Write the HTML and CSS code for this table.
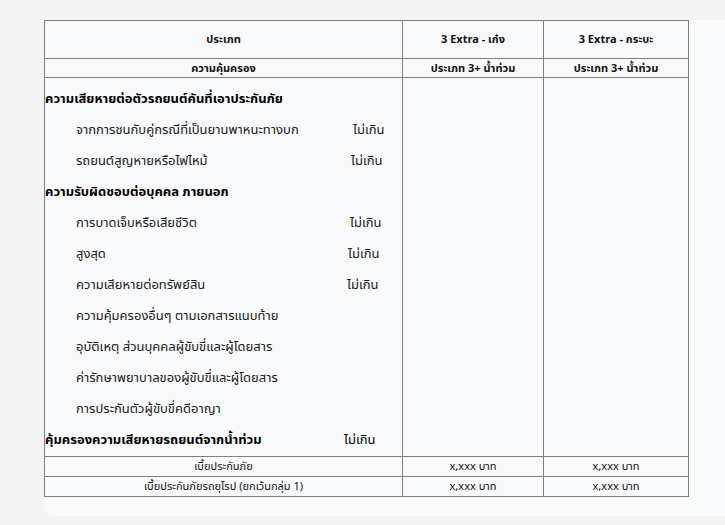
FILE: index.html
```html
<!DOCTYPE html>
<html lang="th">
<head>
<meta charset="utf-8">
<link rel="stylesheet" href="styles.css">
</head>
<body>
<div class="panel">
  <table class="cov">
    <thead>
      <tr class="h1">
        <th class="c1">ประเภท</th>
        <th class="c2">3 Extra - เก๋ง</th>
        <th class="c3">3 Extra - กระบะ</th>
      </tr>
      <tr class="h2">
        <th>ความคุ้มครอง</th>
        <th>ประเภท 3+ น้ำท่วม</th>
        <th>ประเภท 3+ น้ำท่วม</th>
      </tr>
    </thead>
    <tbody>
      <tr class="body">
        <td class="desc">
          <div class="line head">ความเสียหายต่อตัวรถยนต์คันที่เอาประกันภัย</div>
          <div class="line sub"><span class="lbl w1">จากการชนกับคู่กรณีที่เป็นยานพาหนะทางบก</span><span>ไม่เกิน</span></div>
          <div class="line sub"><span class="lbl w2">รถยนต์สูญหายหรือไฟไหม้</span><span>ไม่เกิน</span></div>
          <div class="line head">ความรับผิดชอบต่อบุคคล ภายนอก</div>
          <div class="line sub"><span class="lbl w3">การบาดเจ็บหรือเสียชีวิต</span><span>ไม่เกิน</span></div>
          <div class="line sub"><span class="lbl w4">สูงสุด</span><span>ไม่เกิน</span></div>
          <div class="line sub"><span class="lbl w5">ความเสียหายต่อทรัพย์สิน</span><span>ไม่เกิน</span></div>
          <div class="line sub">ความคุ้มครองอื่นๆ ตามเอกสารแนบท้าย</div>
          <div class="line sub">อุบัติเหตุ ส่วนบุคคลผู้ขับขี่และผู้โดยสาร</div>
          <div class="line sub">ค่ารักษาพยาบาลของผู้ขับขี่และผู้โดยสาร</div>
          <div class="line sub">การประกันตัวผู้ขับขี่คดีอาญา</div>
          <div class="line head"><span class="lbl w6">คุ้มครองความเสียหายรถยนต์จากน้ำท่วม</span><span class="reg">ไม่เกิน</span></div>
        </td>
        <td></td>
        <td></td>
      </tr>
    </tbody>
    <tfoot>
      <tr class="f">
        <td>เบี้ยประกันภัย</td>
        <td>x,xxx บาท</td>
        <td>x,xxx บาท</td>
      </tr>
      <tr class="f">
        <td>เบี้ยประกันภัยรถยุโรป (ยกเว้นกลุ่ม 1)</td>
        <td>x,xxx บาท</td>
        <td>x,xxx บาท</td>
      </tr>
    </tfoot>
  </table>
</div>
</body>
</html>
```

FILE: styles.css
```css
html, body {
  margin: 0;
  padding: 0;
  background: #f3f3f3;
  font-family: "Noto Sans Thai", Tahoma, "DejaVu Sans", sans-serif;
  color: #111;
}
body {
  padding: 20px 0 0 44px;
  height: 525px;
  box-sizing: border-box;
  overflow: hidden;
}
.panel {
  background: #f8f9fb;
  width: 700px;
  height: 496px;
  border-radius: 10px;
}
.cov {
  border-collapse: collapse;
  width: 645px;
  border: 1px solid #2c2c2c;
}
.cov th, .cov td {
  border: 1px solid #808080;
  padding: 0;
}
.cov th.c1 { width: 357px; }
.cov th.c2 { width: 140px; }
.h1 th {
  height: 37px;
  font-size: 11px;
  font-weight: bold;
}
.h2 th {
  height: 18px;
  font-size: 11px;
  font-weight: bold;
}
.body td {
  vertical-align: top;
}
.desc {
  padding-top: 6px !important;
}
.line {
  height: 31px;
  line-height: 31px;
  font-size: 13px;
  white-space: nowrap;
  display: flex;
  color: #1a1a1a;
}
.line.head { font-weight: bold; color: #000; }
.line.sub { padding-left: 31px; }
.lbl { display: inline-block; }
.w1 { width: 277px; }
.w2 { width: 275px; }
.w3 { width: 274px; }
.w4 { width: 272px; }
.w5 { width: 271px; }
.w6 { width: 299px; }
.reg { font-weight: normal; }
.f td {
  height: 19px;
  font-size: 11px;
  text-align: center;
}
```
